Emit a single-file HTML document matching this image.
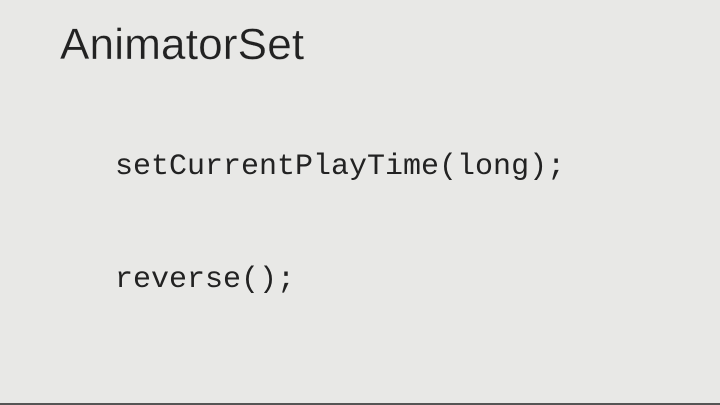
<!DOCTYPE html>
<html><head><style>
html,body{margin:0;padding:0}
body{width:720px;height:405px;background:#e8e8e6;position:relative;overflow:hidden}
.t{position:absolute;left:60px;top:19px;font:400 44px "Liberation Sans",sans-serif;color:#222;letter-spacing:0.2px;line-height:52px;white-space:nowrap;-webkit-text-stroke:0.3px #e8e8e6}
.c{position:absolute;left:115px;font:30px "Liberation Mono",monospace;color:#222;line-height:34px;white-space:nowrap}
.b{position:absolute;left:0;bottom:0;width:720px;height:2px;background:#555}
</style></head><body>
<div class="t">AnimatorSet</div>
<div class="c" style="top:150px">setCurrentPlayTime(long);</div>
<div class="c" style="top:263px">reverse();</div>
<div class="b"></div>
</body></html>
